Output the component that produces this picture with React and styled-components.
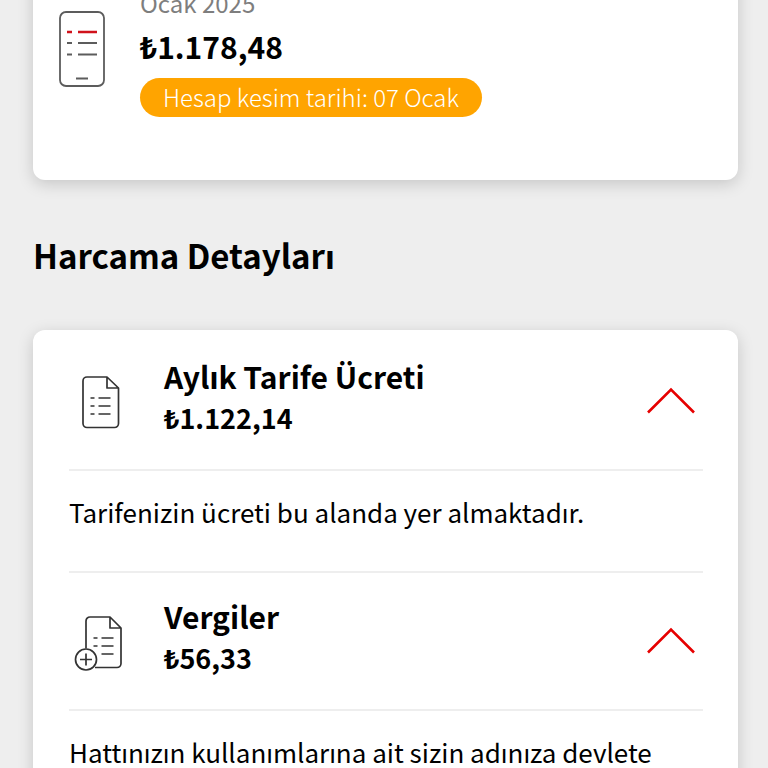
import React, { useState } from 'react';
import styled, { createGlobalStyle } from 'styled-components';

const GlobalStyles = createGlobalStyle`
  :root {
    --red: #e60000;
    --orange: #ffa400;
    --grey: #7e7e7e;
    --line: #eee;
  }
  *, *::before, *::after {
    box-sizing: border-box;
  }
  body {
    margin: 0;
    background: #eee;
    color: #000;
    font-family: 'Noto Sans CJK SC', 'Noto Sans', sans-serif;
  }
  h2, h3, p {
    margin: 0;
  }
`;

const PageStyles = styled.main`
  height: 100vh;
  overflow: hidden;
  padding: 0 30px 0 33px;
`;

const Card = styled.section`
  background: white;
  border-radius: 12px;
  box-shadow: 0 4px 16px rgba(0, 0, 0, 0.17);
`;

const SummaryCard = styled(Card)`
  display: flex;
  align-items: flex-start;
  gap: 34px;
  margin-top: -24px;
  padding: 11px 24px 63px;
  svg {
    flex: none;
    margin-top: 23px;
  }
`;

const Month = styled.p`
  color: var(--grey);
  font-size: 24px;
  line-height: 32px;
`;

const Total = styled.p`
  font-size: 30px;
  font-weight: 700;
  line-height: 54px;
`;

const Badge = styled.p`
  display: inline-block;
  margin-top: 5px;
  padding: 0 23px 1px;
  border-radius: 20px;
  background: var(--orange);
  color: white;
  font-size: 24px;
  font-weight: 300;
  line-height: 38px;
`;

const SectionTitle = styled.h2`
  padding: 48px 0;
  font-size: 33px;
  font-weight: 700;
  line-height: 54px;
`;

const DetailsCard = styled(Card)`
  padding: 3px 35px 0 36px;
`;

const RowButton = styled.button`
  display: flex;
  align-items: center;
  width: 100%;
  padding: 22px 8px 30px 4px;
  border: 0;
  border-bottom: 2px solid var(--line);
  background: none;
  color: inherit;
  font: inherit;
  text-align: left;
  cursor: pointer;
  svg {
    flex: none;
    margin-top: 8px;
  }
  .chevron {
    transform: rotate(${(props) => (props.$open ? '0deg' : '180deg')});
  }
`;

const RowText = styled.span`
  flex: 1;
  display: flex;
  flex-direction: column;
  margin-left: 35px;
  line-height: 42px;
`;

const RowName = styled.span`
  font-size: 30px;
  font-weight: 700;
`;

const RowAmount = styled.span`
  font-size: 27px;
  font-weight: 700;
`;

const RowPanel = styled.p`
  padding: 21px 0 39px;
  border-bottom: 2px solid var(--line);
  font-size: 26px;
  line-height: 40px;
`;

function PhoneIcon() {
  return (
    <svg width="49" height="78" viewBox="0 0 49 78" fill="none" stroke="#5c5c5c" strokeWidth="1.8" aria-hidden="true">
      <rect x="3" y="2" width="44" height="74" rx="6" />
      <path d="M10 33h5M21 33h19M10 44.500h5M21 44.500h19M19 68.500h12" />
      <path d="M10 22h5M21 22h19" stroke="#d0121b" strokeWidth="2.300" />
    </svg>
  );
}

function BillIcon() {
  return (
    <svg width="56" height="60" viewBox="0 0 56 60" fill="none" stroke="#333" strokeWidth="1.700" strokeLinejoin="round" aria-hidden="true">
      <path d="M34 6H14a4 4 0 0 0-4 4V52.500a4 4 0 0 0 4 4h27.500a4 4 0 0 0 4-4V17zM34 6v11h11.500" />
      <path d="M17.500 27h4M25.500 27h12M17.500 35h4M25.500 35h12M17.500 43h4M25.500 43h12" />
    </svg>
  );
}

function BillPlusIcon() {
  return (
    <svg width="56" height="60" viewBox="0 0 56 60" fill="none" stroke="#333" strokeWidth="1.700" strokeLinejoin="round" aria-hidden="true">
      <path d="M13 37.500V10a4 4 0 0 1 4-4h20L48 17V52.500a4 4 0 0 1-4 4H22M37 6v11h11" />
      <path d="M20.500 27h4M28.500 27h12M20.500 35h4M28.500 35h12M28.500 43h12" />
      <circle cx="13" cy="48.500" r="10.500" />
      <path d="M13 42.500v12M7 48.500h12" />
    </svg>
  );
}

function Chevron() {
  return (
    <svg className="chevron" width="48" height="28" viewBox="0 0 48 28" fill="none" stroke="#e60000" strokeWidth="2.600" aria-hidden="true">
      <path d="M1 25.500L24 2.500l23 23" />
    </svg>
  );
}

const details = [
  {
    id: 'tarife',
    name: 'Aylık Tarife Ücreti',
    amount: '₺1.122,14',
    text: 'Tarifenizin ücreti bu alanda yer almaktadır.',
    Icon: BillIcon,
  },
  {
    id: 'vergiler',
    name: 'Vergiler',
    amount: '₺56,33',
    text: 'Hattınızın kullanımlarına ait sizin adınıza devlete',
    Icon: BillPlusIcon,
  },
];

function DetailRow({ detail }) {
  const [open, setOpen] = useState(true);
  const { id, name, amount, text, Icon } = detail;
  return (
    <div>
      <RowButton
        type="button"
        $open={open}
        aria-expanded={open}
        aria-controls={id}
        onClick={() => setOpen(!open)}
      >
        <Icon />
        <RowText>
          <RowName>{name}</RowName>
          <RowAmount>{amount}</RowAmount>
        </RowText>
        <Chevron />
      </RowButton>
      {open && <RowPanel id={id}>{text}</RowPanel>}
    </div>
  );
}

export default function App() {
  return (
    <PageStyles>
      <GlobalStyles />
      <SummaryCard>
        <PhoneIcon />
        <div>
          <Month>Ocak 2025</Month>
          <Total>₺1.178,48</Total>
          <Badge>Hesap kesim tarihi: 07 Ocak</Badge>
        </div>
      </SummaryCard>
      <SectionTitle>Harcama Detayları</SectionTitle>
      <DetailsCard>
        {details.map((detail) => (
          <DetailRow key={detail.id} detail={detail} />
        ))}
      </DetailsCard>
    </PageStyles>
  );
}
